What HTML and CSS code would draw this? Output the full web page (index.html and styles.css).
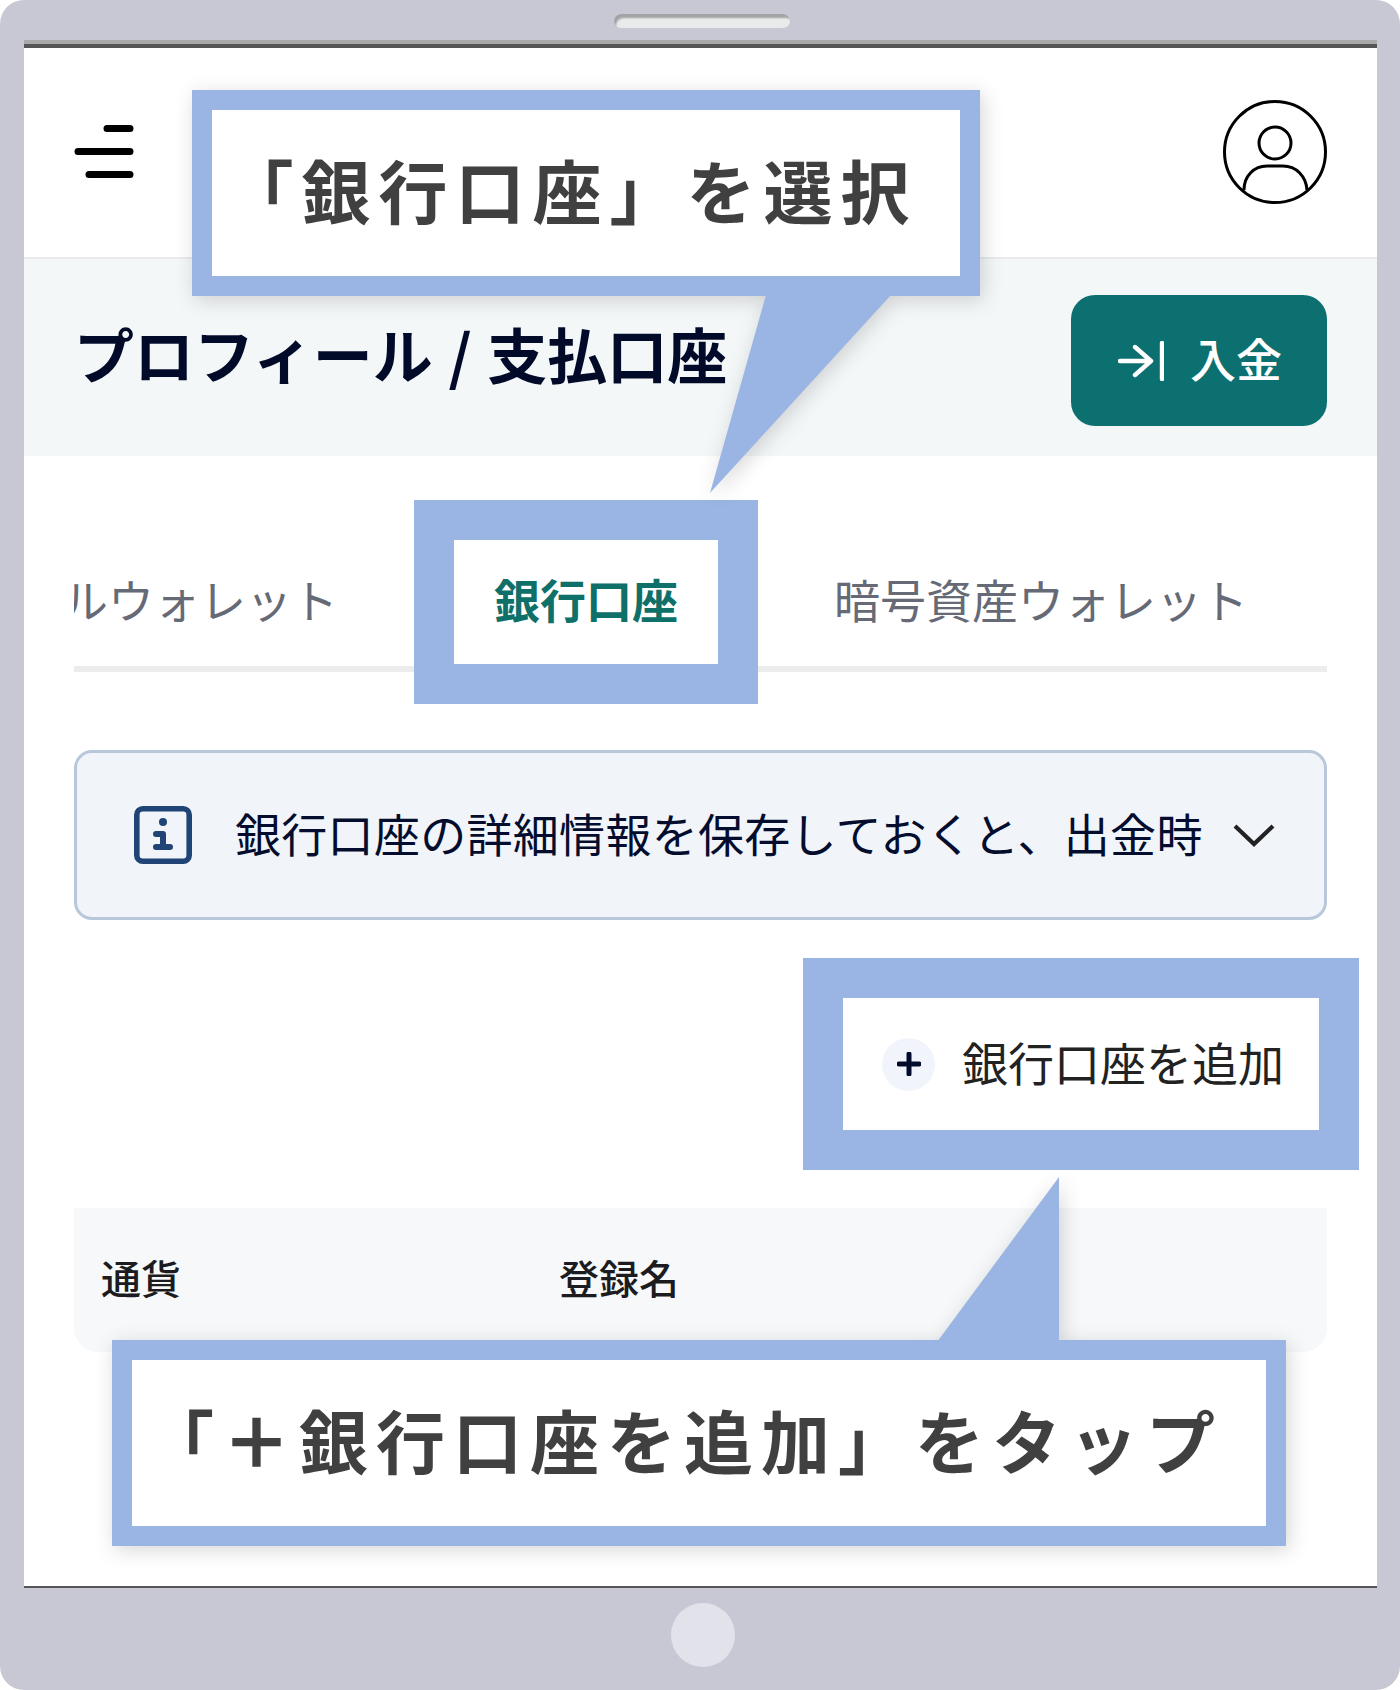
FILE: index.html
```html
<!DOCTYPE html>
<html lang="ja">
<head>
<meta charset="utf-8">
<title>銀行口座の追加</title>
<link rel="stylesheet" href="styles.css">
</head>
<body>
<div class="device">
  <div class="device-top"><span class="speaker"></span></div>
  <div class="screen">
    <header class="app-header">
      <svg class="menu-icon" viewBox="0 0 60 56" width="60" height="56" aria-hidden="true">
        <path d="M33 4.500H56M4 27.500H56M15 50.500H56" fill="none" stroke="#000" stroke-width="7" stroke-linecap="round"/>
      </svg>
      <svg class="avatar-icon" viewBox="0 0 104 104" width="104" height="104" aria-hidden="true">
        <g fill="none" stroke="#000" stroke-width="3">
          <circle cx="52" cy="52" r="50.500"/>
          <circle cx="52" cy="43" r="16"/>
          <path d="M21 90C21 76 31 66 44 66H60C73 66 83 76 84 90"/>
        </g>
      </svg>
    </header>
    <section class="page-bar">
      <h1 class="page-title">プロフィール / 支払口座</h1>
      <button class="deposit-btn" type="button">
        <svg viewBox="0 0 46 40" width="46" height="40" aria-hidden="true">
          <path d="M2 20H33M17 6L33 20L17 34M44 2V38" fill="none" stroke="#fff" stroke-width="4.400" stroke-linecap="round" stroke-linejoin="round"/>
        </svg>
        <span class="deposit-label">入金</span>
      </button>
    </section>
    <main class="content">
      <nav class="tabs">
        <div class="tab tab-clipped"><span>デジタルウォレット</span></div>
        <div class="tab tab-active">銀行口座</div>
        <div class="tab">暗号資産ウォレット</div>
      </nav>
      <div class="notice">
        <svg class="notice-icon" viewBox="0 0 58 58" width="58" height="58" aria-hidden="true">
          <rect x="2.800" y="2.800" width="52.400" height="52.400" rx="6" fill="none" stroke="#1f4475" stroke-width="5.600"/>
          <circle cx="29" cy="16" r="4" fill="#1f4475"/>
          <path d="M22 28H29V41M22 41H36" fill="none" stroke="#1f4475" stroke-width="6" stroke-linecap="round" stroke-linejoin="round"/>
        </svg>
        <p class="notice-text">銀行口座の詳細情報を保存しておくと、出金時</p>
        <svg class="chevron" viewBox="0 0 42 24" width="42" height="24" aria-hidden="true">
          <path d="M2 3L21 21L40 3" fill="none" stroke="#222" stroke-width="4.200"/>
        </svg>
      </div>
      <div class="add-row">
        <button class="add-btn" type="button">
          <span class="add-plus">
            <svg viewBox="0 0 24 24" width="24" height="24" aria-hidden="true">
              <path d="M2 12H22M12 2V22" fill="none" stroke="#000c2a" stroke-width="5" stroke-linecap="round"/>
            </svg>
          </span>
          <span class="add-label">銀行口座を追加</span>
        </button>
      </div>
      <div class="table-head">
        <span class="col-currency">通貨</span>
        <span>登録名</span>
      </div>
    </main>
    <div class="callout callout-top">
      <svg class="pointer pointer-top" viewBox="0 0 181 198" width="181" height="198" aria-hidden="true">
        <polygon points="56,0 181,0 0,198" fill="#9ab5e3"/>
      </svg>
      <span class="callout-text">「銀行口座」を選択</span>
    </div>
    <div class="callout callout-bottom">
      <svg class="pointer pointer-bottom" viewBox="0 0 122 165" width="122" height="165" aria-hidden="true">
        <polygon points="122,0 122,165 0,165" fill="#9ab5e3"/>
      </svg>
      <span class="callout-text">「<span class="callout-plus">＋</span>銀行口座を追加」をタップ</span>
    </div>
  </div>
  <div class="device-bottom"><span class="home-btn"></span></div>
</div>
</body>
</html>
```

FILE: styles.css
```css
* { box-sizing: border-box; }
html, body { margin: 0; padding: 0; background: #fff; }
body {
  width: 1400px;
  height: 1690px;
  font-family: "Noto Sans CJK JP", "Noto Sans", sans-serif;
}
.device {
  width: 1400px;
  height: 1690px;
  background: #c8c8d4;
  border-radius: 24px;
  padding: 0 23px 0 24px;
  display: flex;
  flex-direction: column;
}
.device-top {
  height: 40px;
  padding: 14px 0 0 3px;
  display: flex;
  justify-content: center;
  align-items: flex-start;
}
.speaker {
  width: 176px;
  height: 14px;
  border-radius: 7px;
  background: #e9eaea;
  box-shadow: inset 3px 5px 2px -1px #a3a3a5;
}
.screen {
  position: relative;
  height: 1548px;
  background: #fff;
  border-top: 4px solid #aaa;
  border-bottom: 2px solid #555;
  display: flex;
  flex-direction: column;
}
.screen::before {
  content: "";
  display: block;
  height: 4px;
  background: #555;
}
.app-header {
  height: 211px;
  padding: 0 50px 2px;
  border-bottom: 2px solid #e9ebeb;
  display: flex;
  align-items: center;
  justify-content: space-between;
}
.menu-icon { display: block; }
.avatar-icon { display: block; }
.page-bar {
  height: 197px;
  background: #f4f7f8;
  padding: 36px 50px 0;
  display: flex;
  align-items: flex-start;
  justify-content: space-between;
}
.page-title {
  margin: 0;
  padding-top: 22px;
  font-size: 60px;
  line-height: 72px;
  font-weight: 700;
  word-spacing: 2px;
  color: #020a2a;
  white-space: nowrap;
}
.deposit-btn {
  width: 256px;
  height: 131px;
  border: 0;
  border-radius: 24px;
  background: #0c7070;
  color: #fff;
  font: 500 46px/1 "Noto Sans CJK JP", sans-serif;
  display: flex;
  align-items: center;
  justify-content: center;
  gap: 26px;
  padding: 0 0 0 2px;
}
.deposit-label { padding-bottom: 8px; }
.content {
  padding: 84px 50px 0;
  display: flex;
  flex-direction: column;
}
.tabs {
  height: 132px;
  padding-bottom: 2px;
  border-bottom: 6px solid #ececec;
  display: flex;
  gap: 116px;
  align-items: stretch;
}
.tab {
  font-size: 46px;
  line-height: 116px;
  color: #666a76;
  white-space: nowrap;
}
.tab-clipped {
  width: 264px;
  overflow: hidden;
  display: flex;
  justify-content: flex-end;
}
.tab-clipped span { flex: none; }
.tab-active {
  width: 264px;
  text-align: center;
  font-weight: 700;
  color: #0e7068;
  background: #fff;
  outline: 40px solid #9ab5e3;
}
.notice {
  margin-top: 78px;
  height: 170px;
  width: 1253px;
  background: #f1f4f9;
  border: 3px solid #b8c8da;
  border-radius: 18px;
  padding: 0 49px 0 57px;
  display: flex;
  align-items: center;
}
.notice-icon { flex: none; }
.notice-text {
  margin: 0 0 6px 43px;
  flex: 1;
  font-size: 46px;
  letter-spacing: .3px;
  line-height: 1;
  color: #040d2e;
  white-space: nowrap;
}
.chevron { flex: none; }
.add-row {
  margin-top: 78px;
  padding-right: 8px;
  display: flex;
  justify-content: flex-end;
}
.add-btn {
  width: 476px;
  height: 132px;
  border: 0;
  padding: 0 0 0 39px;
  background: #fff;
  outline: 40px solid #9ab5e3;
  display: flex;
  align-items: center;
  gap: 27px;
  font: 400 46px/1 "Noto Sans CJK JP", sans-serif;
  color: #222;
}
.add-label { padding-bottom: 6px; }
.add-plus {
  width: 53px;
  height: 53px;
  border-radius: 50%;
  background: #f1f5fb;
  display: flex;
  align-items: center;
  justify-content: center;
}
.add-plus svg { display: block; }
.table-head {
  margin-top: 78px;
  height: 144px;
  width: 1253px;
  background: #f6f8fa;
  border-radius: 0 0 24px 24px;
  padding: 0 27px 6px;
  display: flex;
  align-items: center;
  font-size: 40px;
  font-weight: 500;
  color: #1b1b20;
}
.col-currency { width: 458px; }
.callout {
  position: absolute;
  background: #fff;
  border: 20px solid #9ab5e3;
  filter: drop-shadow(3px 4px 10px rgba(0, 0, 0, .16));
  display: flex;
  align-items: center;
  justify-content: center;
  padding: 0 30px 7px 0;
}
.callout-top { left: 168px; top: 46px; width: 788px; height: 206px; }
.callout-bottom { left: 88px; top: 1296px; width: 1174px; height: 206px; }
.pointer { position: absolute; display: block; }
.pointer-top { left: 498px; top: 185px; }
.pointer-bottom { left: 805px; top: -183px; }
.callout-text {
  font-size: 69px;
  line-height: 1;
  font-weight: 700;
  letter-spacing: 8px;
  color: #404040;
  white-space: nowrap;
}
.callout-plus { font-weight: 900; }
.device-bottom {
  flex: 1;
  padding: 15px 0 0 5px;
  display: flex;
  justify-content: center;
  align-items: flex-start;
}
.home-btn {
  width: 64px;
  height: 64px;
  border-radius: 50%;
  background: #e1e2ea;
}
```
